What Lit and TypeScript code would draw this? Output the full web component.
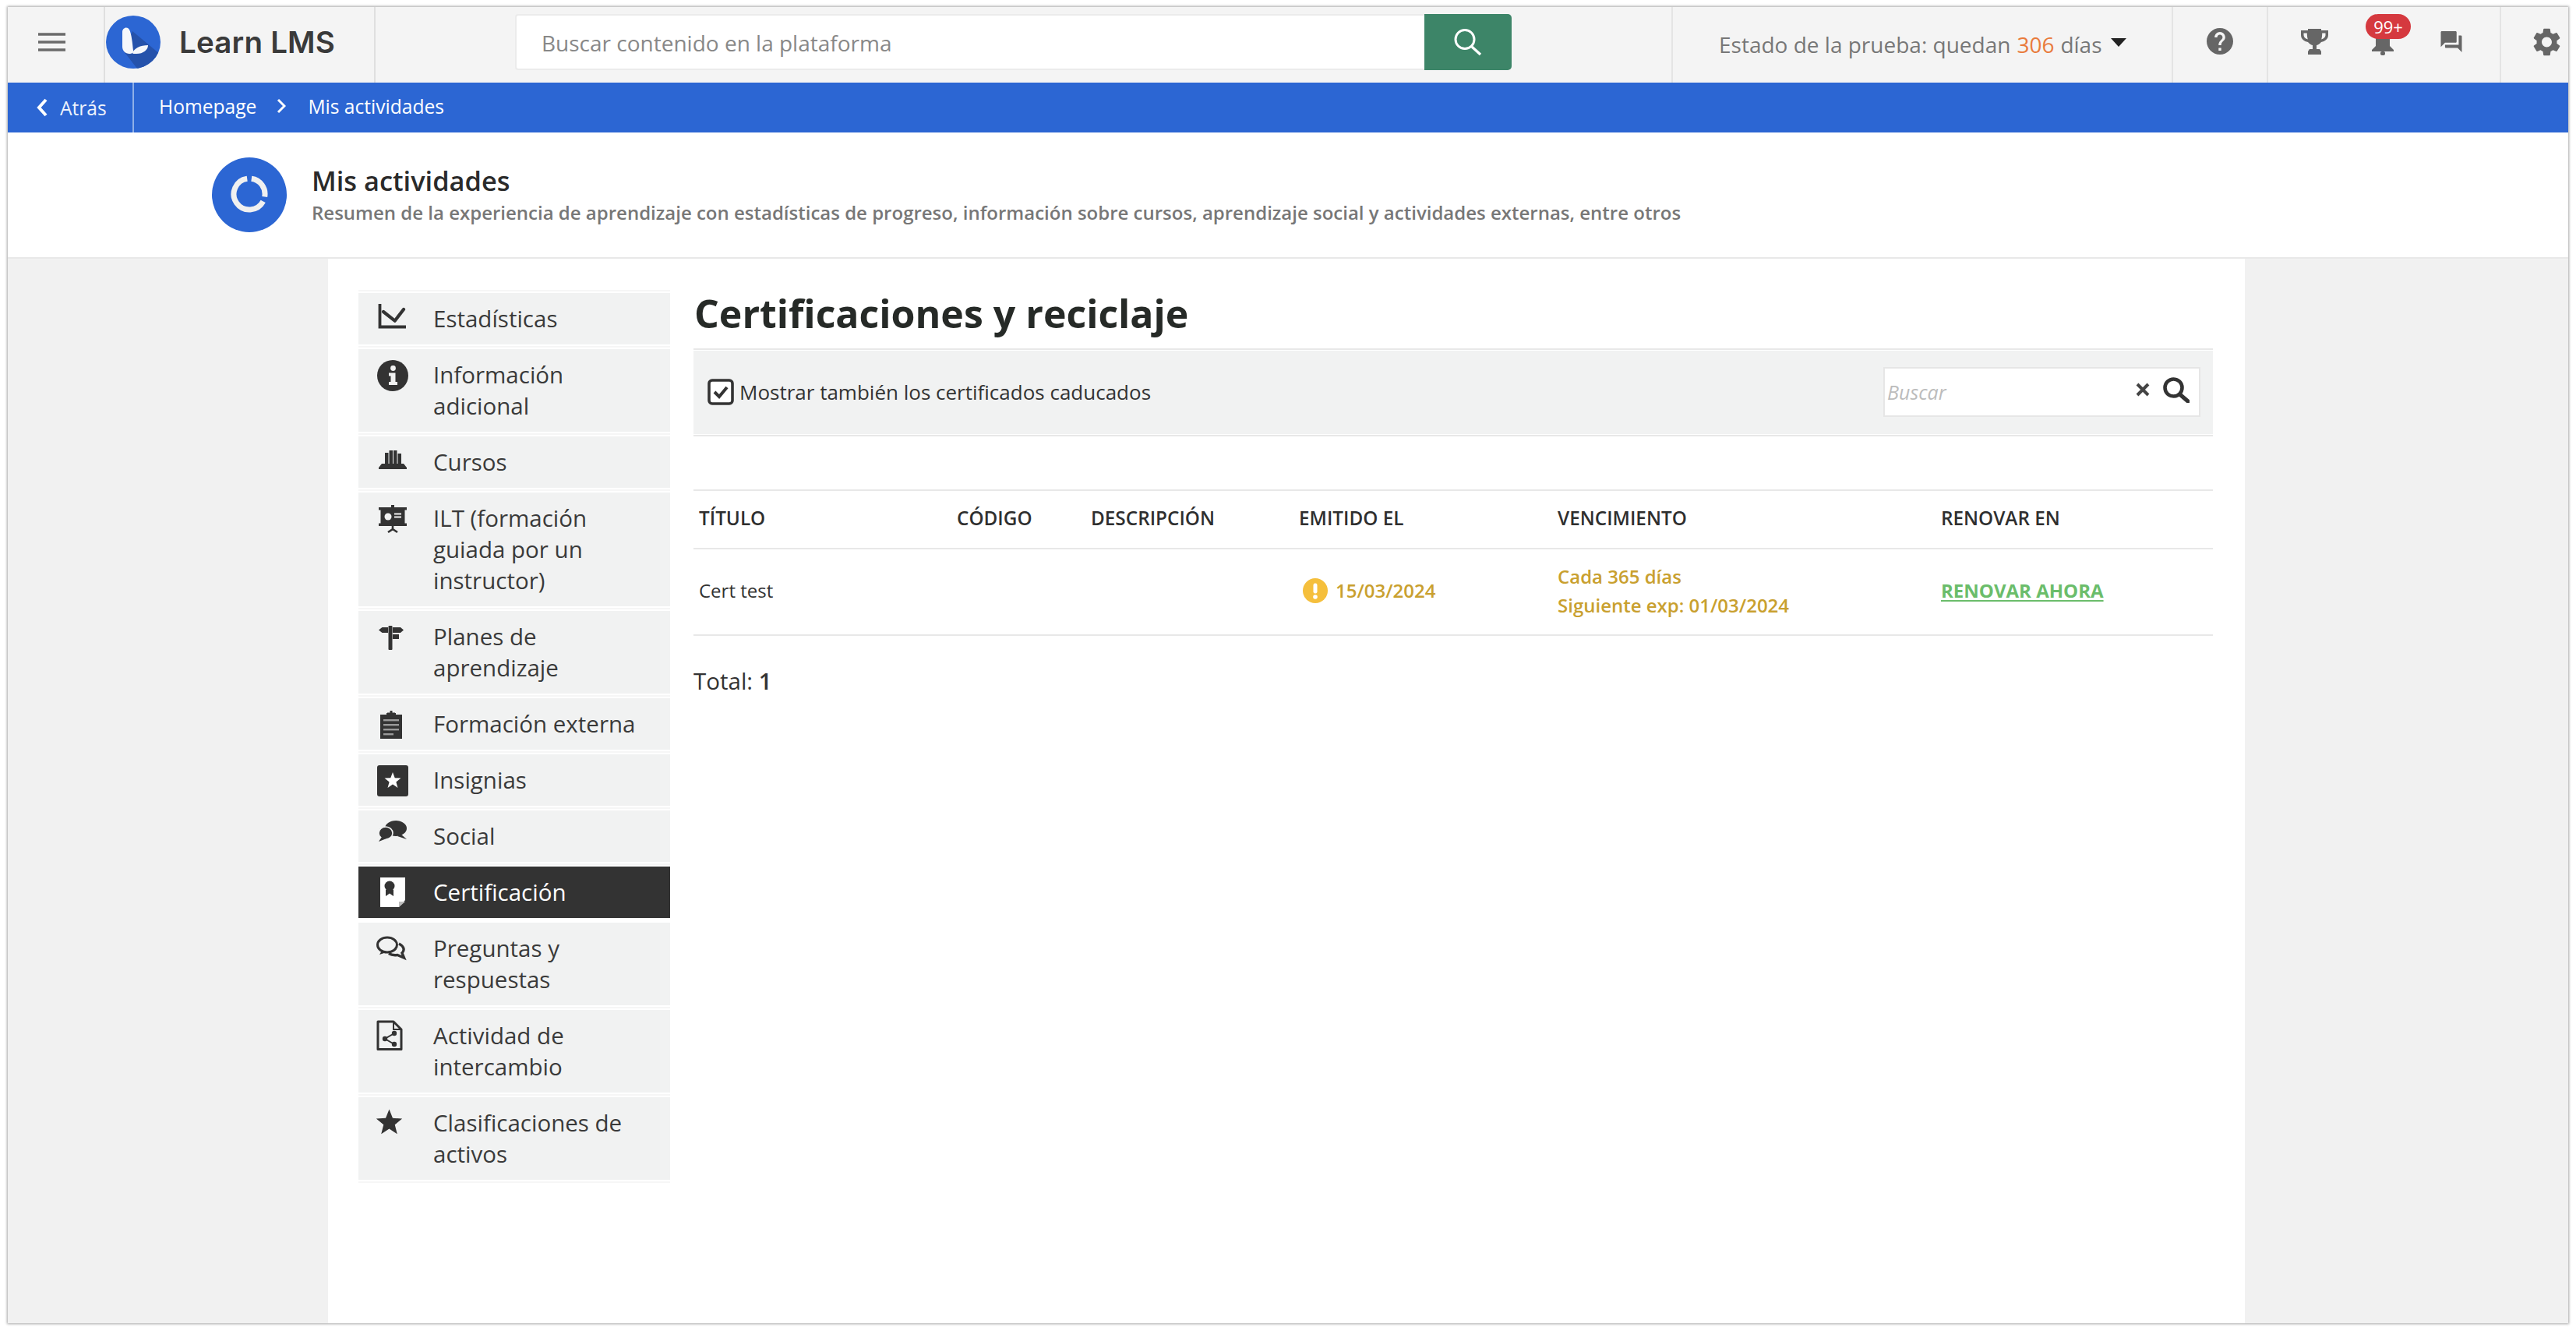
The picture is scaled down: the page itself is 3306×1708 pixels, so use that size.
import { LitElement, html, css, svg } from "lit";
import { customElement } from "lit/decorators.js";

const star = (cx: number, cy: number, R: number, r = R * 0.42) => {
  const p: string[] = [];
  for (let i = 0; i < 10; i++) {
    const a = (Math.PI / 5) * i - Math.PI / 2;
    const q = i % 2 ? r : R;
    p.push(`${(cx + q * Math.cos(a)).toFixed(2)},${(cy + q * Math.sin(a)).toFixed(2)}`);
  }
  return p.join(" ");
};

const D = "currentColor";
const L = "#f1f2f2";

const icons: Record<string, unknown> = {
  stats: svg`<path d="M3.500 1V30.500H37" fill="none" stroke=${D} stroke-width="3.800"/><path d="M8 11L22.700 22.700L34 8" fill="none" stroke=${D} stroke-width="4.200" stroke-linejoin="round" stroke-linecap="round"/>`,
  info: svg`<circle cx="20" cy="21" r="20" fill=${D}/><circle cx="20.500" cy="11.500" r="3.400" fill=${L}/><path d="M15 17.500H23.500V29H26V33H15V29H17.500V21.500H15Z" fill=${L}/>`,
  books: svg`<path d="M6 22H34L38 27V29H2V27Z" fill=${D}/><rect x="10" y="8" width="4.500" height="15" fill=${D}/><rect x="15.500" y="5" width="4.500" height="18" fill=${D}/><rect x="21" y="5" width="4.500" height="18" fill=${D}/><rect x="26.500" y="9" width="4.500" height="14" fill=${D}/>`,
  ilt: svg`<rect x="18" y="3" width="4" height="5" fill=${D}/><rect x="2" y="6" width="36" height="3.500" fill=${D}/><rect x="4.500" y="8" width="31" height="20" fill=${D}/><rect x="2" y="26.500" width="36" height="3.500" fill=${D}/><circle cx="14" cy="18" r="4.500" fill=${L}/><rect x="22" y="13.500" width="9" height="2" fill=${L}/><rect x="22" y="17.500" width="9" height="2" fill=${L}/><path d="M20 30V34L14 38M20 34L26 38" fill="none" stroke=${D} stroke-width="2.600"/>`,
  sign: svg`<rect x="14.500" y="6" width="5" height="31" rx="1" fill=${D}/><path d="M2 11.500L6.500 8H14V15H6.500Z" fill=${D}/><path d="M20 8H30L34 11.500L30 15H20Z" fill=${D}/><path d="M20 17H28V23H20Z" fill=${D}/>`,
  clip: svg`<rect x="4" y="8" width="28" height="31" fill=${D}/><path d="M13 8V5.500H16.500V3H19.500V5.500H23V8Z" fill=${D}/><rect x="12" y="6" width="12" height="5" fill=${D}/><rect x="8" y="14" width="20" height="2.400" fill="#9a9a9a"/><rect x="8" y="20" width="20" height="2.400" fill="#9a9a9a"/><rect x="8" y="26" width="20" height="2.400" fill="#9a9a9a"/><rect x="8" y="32" width="13" height="2.400" fill="#9a9a9a"/>`,
  badge: svg`<rect x="0" y="1" width="40" height="40" rx="3" fill=${D}/><polygon points=${star(20, 21, 11)} fill="#fff"/>`,
  social: svg`<ellipse cx="24" cy="10" rx="14" ry="10" fill=${D}/><path d="M30 17L38 24L26 20Z" fill=${D}/><ellipse cx="11" cy="16" rx="9" ry="8" fill=${D} stroke=${L} stroke-width="1.600"/><path d="M6 21L2 27L12 23Z" fill=${D}/>`,
  cert: svg`<path d="M4 1H36V30L28 39H4Z" fill="#fff"/><path d="M28 39V32H36Z" fill="#bdbdbd"/><circle cx="16" cy="12" r="6.500" fill="#333"/><path d="M11 17H21V25L16 21.500L11 25Z" fill="#333"/>`,
  qa: svg`<ellipse cx="13" cy="15.500" rx="12.500" ry="9.500" fill="none" stroke=${D} stroke-width="3"/><path d="M6 23L3 28L12 25" fill=${D}/><path d="M28 14C34 17 36 22 32 26L34.500 32L26 28.500C22 29 18 28.500 15 26.500" fill="none" stroke=${D} stroke-width="3.400"/>`,
  share: svg`<path d="M1 2H21L31 12V37.500H1Z" fill="none" stroke=${D} stroke-width="3" stroke-linejoin="round"/><path d="M21 2V12H31" fill="none" stroke=${D} stroke-width="2"/><path d="M22 17L10 24L22 31" fill="none" stroke=${D} stroke-width="2"/><circle cx="10" cy="24" r="3.200" fill=${D}/><circle cx="22" cy="17" r="3.200" fill=${D}/><circle cx="22" cy="31" r="3.200" fill=${D}/>`,
  star: svg`<polygon points=${star(15.5, 20, 17.5, 7.6)} fill=${D}/>`,
};

const items: [string, string, boolean?][] = [
  ["stats", "Estadísticas"],
  ["info", "Información adicional"],
  ["books", "Cursos"],
  ["ilt", "ILT (formación guiada por un instructor)"],
  ["sign", "Planes de aprendizaje"],
  ["clip", "Formación externa"],
  ["badge", "Insignias"],
  ["social", "Social"],
  ["cert", "Certificación", true],
  ["qa", "Preguntas y respuestas"],
  ["share", "Actividad de intercambio"],
  ["star", "Clasificaciones de activos"],
];

@customElement("app-root")
export class AppRoot extends LitElement {
  static styles = css`
    :host { display: block; font-family: "Open Sans", "Noto Sans", sans-serif; color: #333; background: #fff; }
    * { box-sizing: border-box; }
    .page { height: 1708px; padding: 9px 10px 10px; }
    .frame { height: 1689px; display: flex; flex-direction: column; box-shadow: 0 0 3px 1px rgba(0,0,0,.35); background: #f1f1f1; }

    .top { height: 97px; flex: none; display: flex; background: #f4f4f4; }
    .menu { width: 123px; display: flex; padding: 33px 0 0 39px; }
    .menu svg { width: 35px; height: 24px; }
    .logo { width: 349px; display: flex; align-items: flex-start; border-left: 2px solid #dfdfdf; border-right: 2px solid #dfdfdf; padding: 11px 0 0 1px; gap: 24px; }
    .logo svg { width: 70px; height: 68px; flex: none; }
    .logo span { font-family: Inter, sans-serif; font-weight: 600; font-size: 38.5px; line-height: 68px; color: #3a3a3a; letter-spacing: 0.2px; white-space: nowrap; }
    .search { margin-left: 179px; margin-top: 9px; display: flex; height: 72px; }
    .search .field { width: 1167px; background: #fff; border: 2px solid #ebebeb; border-right: none; border-radius: 4px 0 0 4px; padding: 2px 0 0 32px; font-size: 28px; line-height: 66px; color: #888; }
    .search .btn { width: 112px; background: #3d8568; border-radius: 0 5px 5px 0; display: flex; align-items: center; justify-content: center; }
    .search .btn svg { width: 36px; height: 36px; }
    .spacer { width: 205px; }
    .trial { width: 642px; border-left: 2px solid #e4e4e4; display: flex; align-items: center; padding: 0 0 2px 59px; font-size: 28px; color: #777; white-space: nowrap; }
    .trial b { font-weight: 400; color: #e97b3c; margin: 0 8px; }
    .caret { width: 0; height: 0; border-left: 10px solid transparent; border-right: 10px solid transparent; border-top: 11px solid #222; margin: 0 0 4px 11px; }
    .help { width: 122px; border-left: 2px solid #e4e4e4; display: flex; align-items: center; justify-content: center; padding-bottom: 9px; }
    .help svg { width: 34px; height: 34px; }
    .group { width: 299px; border-left: 2px solid #e4e4e4; display: flex; align-items: flex-start; padding: 28px 0 0 42px; color: #666; }
    .group svg { display: block; }
    .trophy svg { width: 35px; height: 33px; }
    .bell { position: relative; margin-left: 56px; }
    .bell svg { width: 28px; height: 34px; }
    .badge { position: absolute; left: -8px; top: -19px; width: 58px; height: 32px; border-radius: 16px; background: #d5393f; color: #fff; font-size: 22px; line-height: 32px; text-align: center; }
    .chat { margin-left: 60px; margin-top: 3px; }
    .chat svg { width: 28px; height: 27px; }
    .gear { flex: 1; border-left: 2px solid #e4e4e4; padding: 27px 0 0 41px; }
    .gear svg { display: block; width: 35px; height: 36px; }

    .crumbs { height: 64px; flex: none; background: #2c66d3; color: #fff; display: flex; align-items: center; font-size: 24.600px; font-weight: 500; }
    .back { width: 162px; height: 100%; border-right: 2px solid #8fb0e8; display: flex; align-items: center; padding-left: 36px; gap: 15px; color: #eef3fc; }
    .back svg { width: 16px; height: 26px; }
    .trail { display: flex; align-items: center; padding-left: 32px; padding-bottom: 4px; }
    .trail svg { width: 12px; height: 20px; margin: 0 28px 0 26px; }

    .head { height: 162px; flex: none; background: #fff; border-bottom: 2px solid #e8e8e8; display: flex; padding: 32px 0 0 262px; gap: 32px; }
    .head svg { width: 96px; height: 96px; flex: none; }
    .head h2 { margin: 6px 0 0; font-size: 34.400px; line-height: 48px; font-weight: 600; color: #2b2b2b; }
    .head p { margin: -1px 0 0; font-size: 24px; line-height: 36px; font-weight: 600; color: #777; white-space: nowrap; }

    .body { flex: 1; display: flex; justify-content: center; padding-right: 4px; }
    .col { width: 2460px; background: #fff; display: flex; padding: 40px 0 0 39px; gap: 30px; }
    .side { width: 400px; flex: none; align-self: flex-start; border-top: 2px solid #f6f6f6; padding: 2px 0 0; list-style: none; margin: 0; }
    .item { display: flex; align-items: flex-start; background: #f1f2f2; margin-bottom: 6px; padding: 13px 30px 13px 24px; font-size: 29.500px; line-height: 40px; color: #3a3a3a; box-shadow: 0 2px 0 #fff, 0 4px 0 #f6f6f6; }
    .item svg { width: 40px; height: 40px; flex: none; overflow: visible; margin-right: 32px; color: #333; }
    .item.on { background: #333; color: #fff; box-shadow: none; }

    .main { width: 1950px; flex: none; }
    h1 { margin: 0 0 15px; height: 60px; font-size: 50px; line-height: 60px; font-weight: 700; color: #262a27; padding-left: 1px; }
    .bar { border-top: 2px solid #e8e8e8; border-bottom: 2px solid #e8e8e8; height: 113px; padding: 1px 0; }
    .bar > div { height: 100%; background: #f1f2f2; display: flex; align-items: center; justify-content: space-between; padding: 0 16px 2px 18px; }
    .check { display: flex; align-items: center; gap: 7px; font-size: 26px; color: #333; }
    .check svg { width: 34px; height: 34px; }
    .find { width: 407px; height: 64px; background: #fff; border: 2px solid #e6e6e6; display: flex; align-items: center; padding: 0 12px 0 3px; }
    .find i { flex: 1; font-size: 25px; color: #bcbcbc; }
    .find svg { display: block; }
    .x { width: 20px; height: 18px; margin: -6px 15px 0 0; }
    .mag { width: 35px; height: 33px; margin-top: -4px; }

    .tbl { margin-top: 68px; display: grid; grid-template-columns: 331px 172px 267px 332px 492px 356px; border-top: 2px solid #e8e8e8; font-size: 24px; }
    .th { height: 75px; border-bottom: 2px solid #e8e8e8; padding: 0 0 4px 7px; display: flex; align-items: center; font-weight: 600; color: #2f2f2f; font-size: 24.300px; }
    .td { height: 111px; border-bottom: 2px solid #e8e8e8; padding: 0 0 4px 7px; display: flex; align-items: center; color: #333; }
    .amber { color: #c9a02f; font-weight: 600; }
    .date { gap: 10px; padding-left: 12px; }
    .date svg { width: 32px; height: 32px; }
    .exp { flex-direction: column; align-items: flex-start; justify-content: center; line-height: 37px; }
    .renew { color: #6bbd6b; font-weight: 700; text-decoration: underline; text-underline-offset: 3px; text-decoration-thickness: 2px; }
    .total { margin-top: 38px; font-size: 29.500px; line-height: 40px; color: #333; }
    .total b { font-weight: 600; }
  `;

  render() {
    return html`<div class="page"><div class="frame">
      <header class="top">
        <div class="menu"><svg viewBox="0 0 35 24"><path d="M0 2H35M0 12H35M0 22H35" stroke="#6a6a6a" stroke-width="3.400"/></svg></div>
        <div class="logo">
          <svg viewBox="0 0 70 68">
            <defs><clipPath id="c"><ellipse cx="35" cy="34" rx="35" ry="34"/></clipPath></defs>
            <ellipse cx="35" cy="34" rx="35" ry="34" fill="#2c66d3"/>
            <path d="M23 46L34 20L70 50V68H40Z" fill="#2552ab" clip-path="url(#c)"/>
            <path d="M21 21C21 16 27 13 30 18C33 24 34 36 35 45C35.300 48 33 49 30 49C25 49 21 45 21 40Z" fill="#f5f7fb"/>
            <path d="M34 48C36 42 44 38 54 38C54 44 48 49 39 49C36 49 34 49 34 48Z" fill="#f5f7fb"/>
          </svg>
          <span>Learn LMS</span>
        </div>
        <div class="search">
          <div class="field">Buscar contenido en la plataforma</div>
          <div class="btn"><svg viewBox="0 0 36 36"><circle cx="14" cy="14.500" r="12" fill="none" stroke="#fff" stroke-width="3"/><path d="M23 24L34 34" stroke="#fff" stroke-width="3.400"/></svg></div>
        </div>
        <div class="spacer"></div>
        <div class="trial">Estado de la prueba: quedan<b>306</b>días<span class="caret"></span></div>
        <div class="help"><svg viewBox="2 2 20 20" fill="#666"><path d="M12 2C6.480 2 2 6.480 2 12s4.480 10 10 10 10-4.480 10-10S17.520 2 12 2zm1 17h-2v-2h2v2zm2.070-7.750l-.9.920C13.450 12.900 13 13.500 13 15h-2v-.5c0-1.100.45-2.100 1.170-2.830l1.240-1.260c.37-.36.59-.86.59-1.410 0-1.100-.9-2-2-2s-2 .9-2 2H8c0-2.210 1.790-4 4-4s4 1.790 4 4c0 .88-.36 1.680-.93 2.250z"/></svg></div>
        <div class="group">
          <div class="trophy"><svg viewBox="0 0 35 33" fill="#666"><path fill-rule="evenodd" d="M9 0H26V2H35V8C35 13 31 16 26 17C24 19.500 21 21 20 21V26H24L26 29V33H9V29L11 26H15V21C14 21 11 19.500 9 17C4 16 0 13 0 8V2H9ZM3.500 5.500V8C3.500 10 5 12.500 8.800 13.600C8 11 7.800 8 7.800 5.500ZM31.500 5.500V8C31.500 10 30 12.500 26.200 13.600C27 11 27.200 8 27.200 5.500Z"/></svg></div>
          <div class="bell">
            <svg viewBox="0 0 28 34" fill="#666"><path d="M14 0C7 2 5 8 5 14V22L0 27V29H28V27L23 22V14C23 8 21 2 14 0Z"/><rect x="11" y="29" width="6" height="5" rx="2"/></svg>
            <span class="badge">99+</span>
          </div>
          <div class="chat"><svg viewBox="2 2 20 20" fill="#666"><path d="M21 6h-2v9H6v2c0 .55.45 1 1 1h11l4 4V7c0-.55-.45-1-1-1zm-4 6V3c0-.55-.45-1-1-1H3c-.55 0-1 .45-1 1v14l4-4h10c.55 0 1-.45 1-1z"/></svg></div>
        </div>
        <div class="gear"><svg viewBox="2.500 2 19 20" fill="#666"><path d="M19.140 12.940c.04-.3.06-.61.06-.94 0-.32-.02-.64-.07-.94l2.030-1.580a.49.49 0 0 0 .12-.61l-1.920-3.320a.488.488 0 0 0-.59-.22l-2.390.96c-.5-.38-1.030-.7-1.620-.94l-.36-2.540a.484.484 0 0 0-.48-.41h-3.840c-.24 0-.43.17-.47.41l-.36 2.540c-.59.24-1.130.57-1.620.94l-2.390-.96c-.22-.08-.47 0-.59.22L2.740 8.870c-.12.21-.08.47.12.61l2.030 1.580c-.05.3-.09.63-.09.94s.02.64.07.94l-2.030 1.580a.49.49 0 0 0-.12.61l1.920 3.320c.12.22.37.29.59.22l2.390-.96c.5.38 1.030.7 1.620.94l.36 2.540c.05.24.24.41.48.41h3.840c.24 0 .44-.17.47-.41l.36-2.540c.59-.24 1.130-.56 1.620-.94l2.390.96c.22.08.47 0 .59-.22l1.920-3.320c.12-.22.07-.47-.12-.61l-2.010-1.580zM12 15.600c-1.980 0-3.600-1.620-3.600-3.600s1.620-3.600 3.600-3.600 3.600 1.620 3.600 3.600-1.620 3.600-3.600 3.600z"/></svg></div>
      </header>

      <nav class="crumbs">
        <div class="back"><svg viewBox="0 0 16 26"><path d="M13 3L4 13L13 23" fill="none" stroke="#fff" stroke-width="4"/></svg>Atrás</div>
        <div class="trail">Homepage<svg viewBox="0 0 12 20"><path d="M2 2L10 10L2 18" fill="none" stroke="#fff" stroke-width="3"/></svg>Mis actividades</div>
      </nav>

      <section class="head">
        <svg viewBox="0 0 96 96"><circle cx="48" cy="48" r="48" fill="#2c66d3"/><path d="M50.800 27.200A20 20 0 0 1 67.700 50.500M65.700 56.400A20 20 0 1 1 45.200 27.200" fill="none" stroke="#f0f0f0" stroke-width="7"/></svg>
        <div>
          <h2>Mis actividades</h2>
          <p>Resumen de la experiencia de aprendizaje con estadísticas de progreso, información sobre cursos, aprendizaje social y actividades externas, entre otros</p>
        </div>
      </section>

      <div class="body"><div class="col">
        <ul class="side">
          ${items.map(([ic, label, on]) => html`<li class="item ${on ? "on" : ""}">
            <svg viewBox="0 0 40 40">${icons[ic]}</svg><span>${label}</span></li>`)}
        </ul>
        <main class="main">
          <h1>Certificaciones y reciclaje</h1>
          <div class="bar"><div>
            <label class="check"><svg viewBox="0 0 34 34"><rect x="2" y="2" width="30" height="30" rx="4" fill="#fff" stroke="#333" stroke-width="3.600"/><path d="M9 17L15 23L25 11" fill="none" stroke="#333" stroke-width="4"/></svg>Mostrar también los certificados caducados</label>
            <div class="find"><i>Buscar</i>
              <svg class="x" viewBox="0 0 20 18"><path d="M3 2L17 16M17 2L3 16" stroke="#444" stroke-width="4"/></svg>
              <svg class="mag" viewBox="0 0 35 33"><circle cx="14.500" cy="13.500" r="11" fill="none" stroke="#333" stroke-width="4.600"/><path d="M22.500 22L33 31" stroke="#333" stroke-width="5.200" stroke-linecap="round"/></svg>
            </div>
          </div></div>
          <div class="tbl">
            <div class="th">TÍTULO</div><div class="th">CÓDIGO</div><div class="th">DESCRIPCIÓN</div><div class="th">EMITIDO EL</div><div class="th">VENCIMIENTO</div><div class="th">RENOVAR EN</div>
            <div class="td">Cert test</div><div class="td"></div><div class="td"></div>
            <div class="td amber date"><svg viewBox="0 0 32 32"><circle cx="16" cy="16" r="16" fill="#f5bf3c"/><rect x="13.500" y="6.500" width="5" height="13" rx="2.200" fill="#fff"/><circle cx="16" cy="24" r="2.800" fill="#fff"/></svg>15/03/2024</div>
            <div class="td amber exp"><span>Cada 365 días</span><span>Siguiente exp: 01/03/2024</span></div>
            <div class="td"><span class="renew">RENOVAR AHORA</span></div>
          </div>
          <div class="total">Total: <b>1</b></div>
        </main>
      </div></div>
    </div></div>`;
  }
}
